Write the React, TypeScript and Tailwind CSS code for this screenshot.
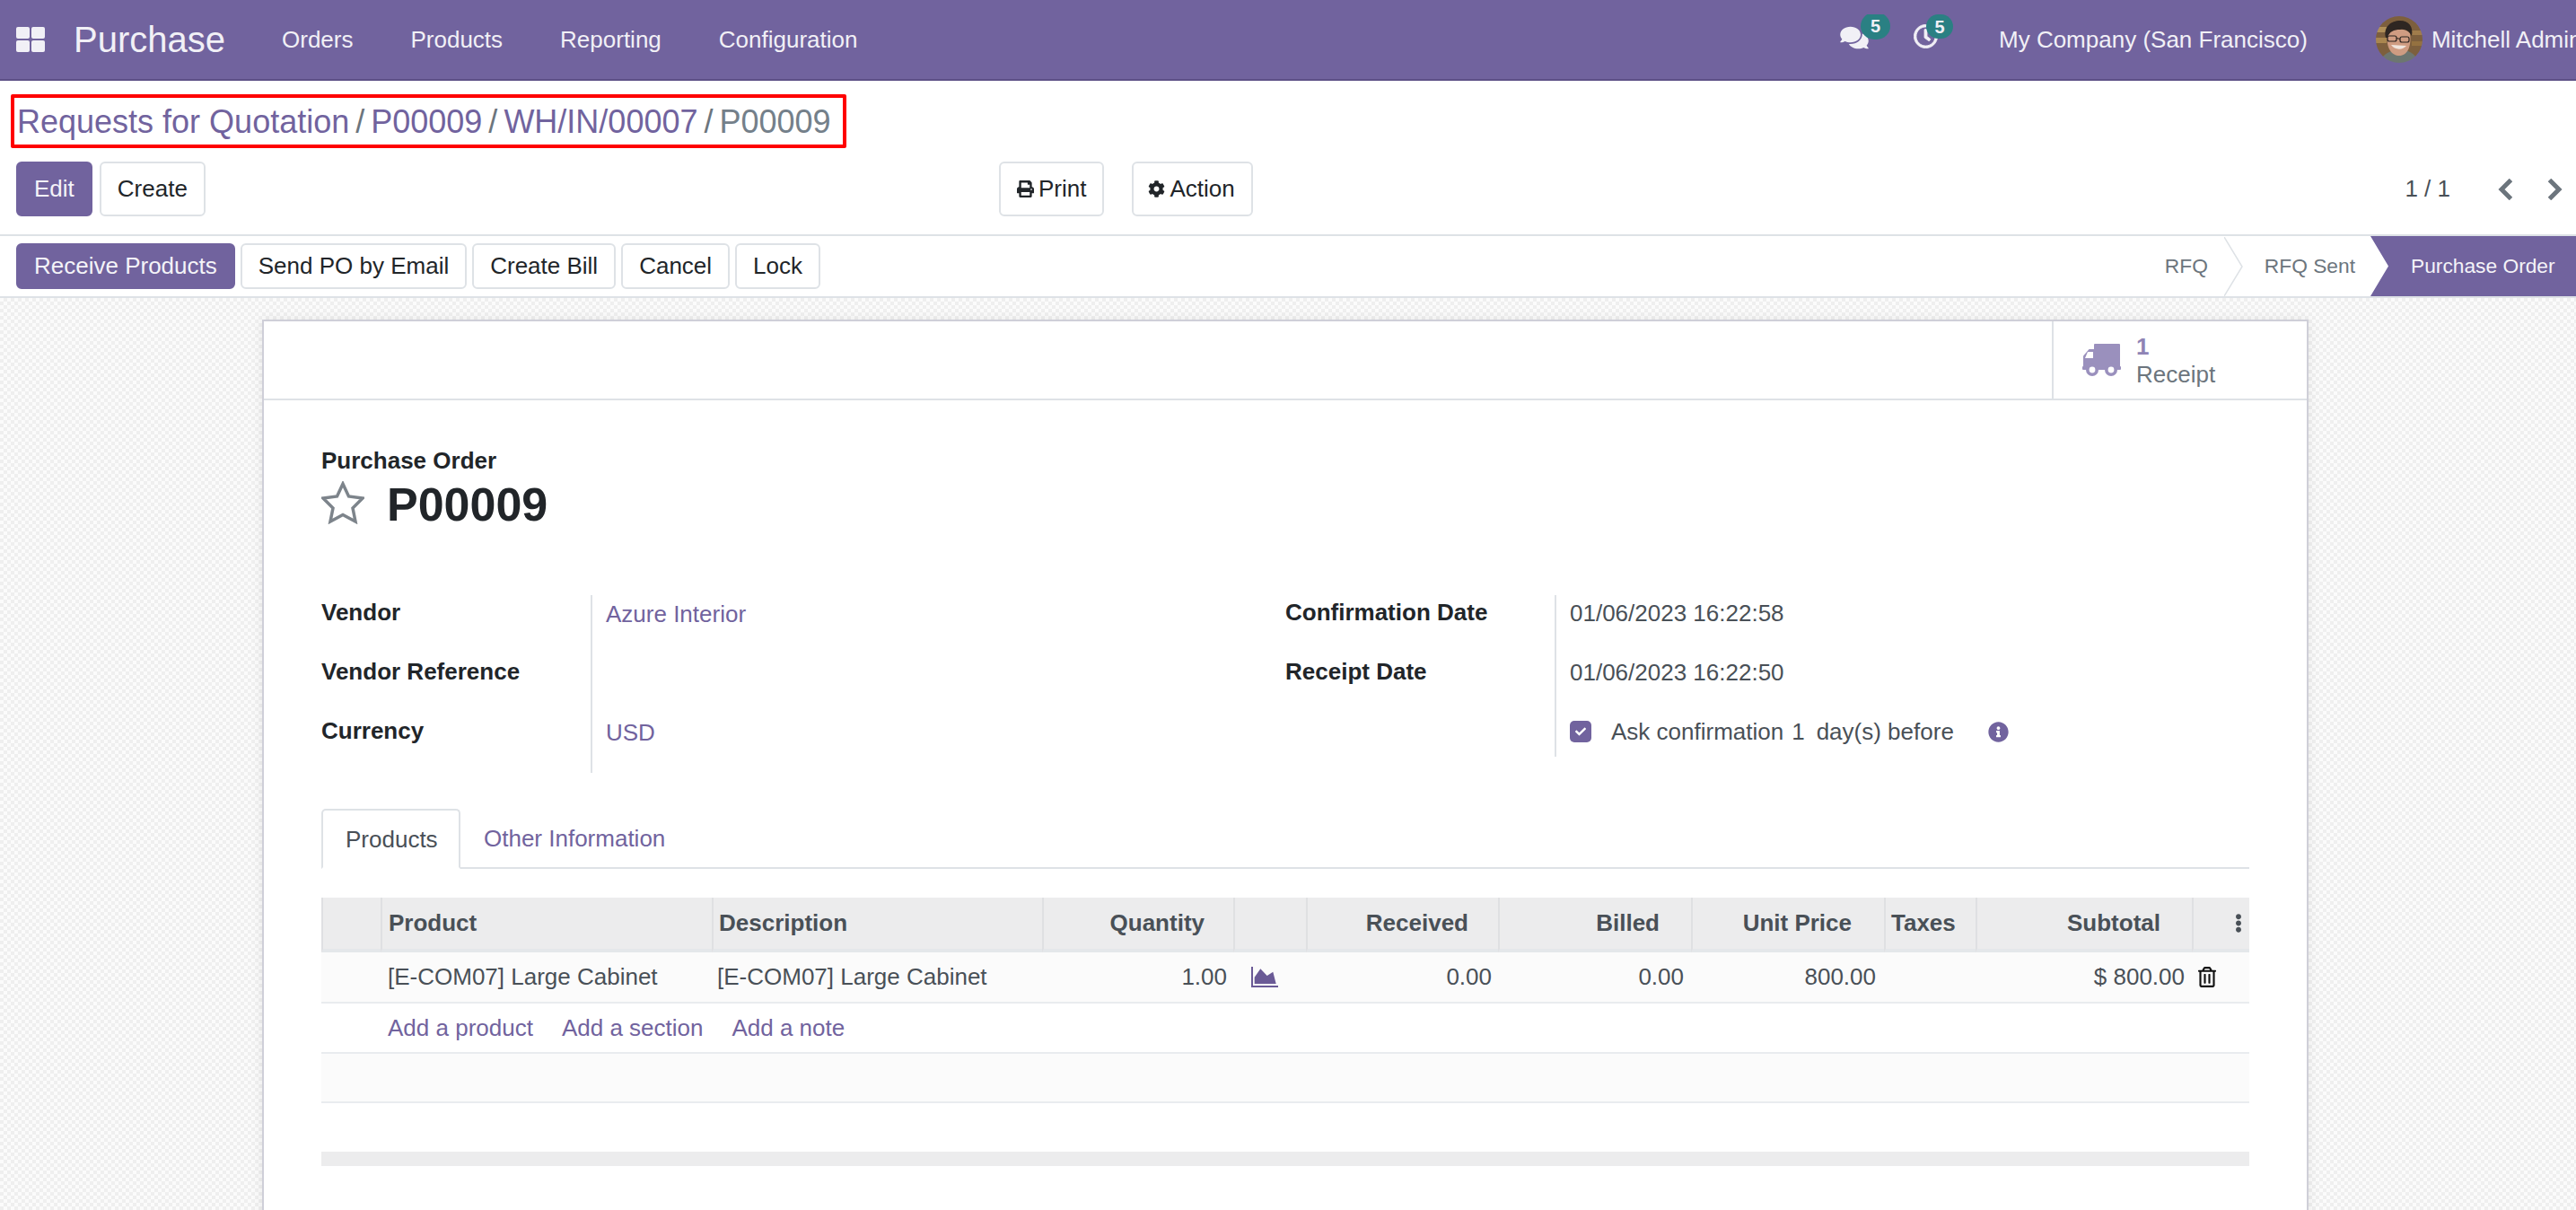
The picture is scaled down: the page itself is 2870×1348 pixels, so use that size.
import { FaCheck, FaCog, FaComments, FaEllipsisV, FaInfoCircle, FaPrint, FaRegClock, FaRegTrashAlt } from "react-icons/fa";

const menuItems = ["Orders", "Products", "Reporting", "Configuration"];

function AppsIcon() {
  return (
    <svg className="h-[28px] w-[32px] shrink-0" viewBox="0 0 32 28" fill="#f1f0f6">
      <rect x="0" y="0" width="15" height="13" rx="2" />
      <rect x="17" y="0" width="15" height="13" rx="2" />
      <rect x="0" y="15" width="15" height="13" rx="2" />
      <rect x="17" y="15" width="15" height="13" rx="2" />
    </svg>
  );
}

function Avatar() {
  return (
    <svg className="h-[52px] w-[52px] shrink-0 rounded-full" viewBox="0 0 52 52">
      <defs>
        <filter id="soft">
          <feGaussianBlur stdDeviation="0.7" />
        </filter>
      </defs>
      <g filter="url(#soft)">
        <rect width="52" height="52" fill="#7d5f3d" />
        <rect x="0" y="12" width="12" height="6" fill="#b08f58" />
        <rect x="0" y="24" width="12" height="6" fill="#a98650" />
        <rect x="40" y="16" width="12" height="5" fill="#a07c4c" />
        <rect x="40" y="28" width="12" height="5" fill="#94713f" />
        <path d="M5 52C6 43 14 40 20 38H33C39 40 46 43 47 52Z" fill="#6d766f" />
        <path d="M13 20C11 36 18 44 26 44C35 44 40 34 38 19C33 13 18 13 13 20Z" fill="#cf9c82" />
        <path d="M11 24C8 12 17 5 27 5C37 5 42 12 40 22C37 17 34 14 27 15C20 15 15 17 13 24Z" fill="#2f2620" />
        <rect x="13" y="22" width="10" height="6" rx="2" fill="none" stroke="#2b2420" strokeWidth="1.2" />
        <rect x="27" y="23" width="10" height="6" rx="2" fill="none" stroke="#2b2420" strokeWidth="1.2" />
        <path d="M23 24.5L27 25.5" stroke="#2b2420" strokeWidth="1.2" />
        <path d="M17 32C21 38 30 38 34 33Z" fill="#f1e6de" />
      </g>
    </svg>
  );
}

function Badge({ className }: { className: string }) {
  return (
    <span className={`absolute flex items-center justify-center rounded-full bg-[#2a8083] text-[20px] font-bold text-[#f1f0f6] ${className}`}>
      5
    </span>
  );
}

function Navbar() {
  return (
    <header className="flex h-[90px] shrink-0 items-center border-b-2 border-[#5d5086] bg-[#71639e] pl-[18px] text-[26px] text-[#f1f0f6]">
      <AppsIcon />
      <div className="ml-[32px] w-[232px] shrink-0 text-[40px]">Purchase</div>
      <nav className="flex gap-[64px]">
        {menuItems.map((item) => (
          <span key={item}>{item}</span>
        ))}
      </nav>
      <div className="ml-auto flex w-[820px] shrink-0 items-center overflow-hidden">
        <div className="relative h-[56px] w-[82px] shrink-0">
          <FaComments className="absolute left-0 top-[12px] h-[28px] w-[32px]" />
          <Badge className="left-[23px] top-[-2px] h-[30px] w-[33px]" />
        </div>
        <div className="relative h-[56px] w-[95px] shrink-0">
          <FaRegClock className="absolute left-0 top-[11px] h-[27px] w-[27px]" stroke="currentColor" strokeWidth={16} />
          <Badge className="left-[14px] top-0 h-[27px] w-[30px]" />
        </div>
        <span className="whitespace-nowrap">My Company (San Francisco)</span>
        <div className="ml-[76px] flex shrink-0 items-center gap-[10px]">
          <Avatar />
          <span className="whitespace-nowrap">Mitchell Admin</span>
        </div>
      </div>
    </header>
  );
}

function Button({ primary, children }: { primary?: boolean; children: React.ReactNode }) {
  return (
    <button
      className={
        primary
          ? "flex h-full items-center gap-[5px] rounded-[6px] border-2 border-[#71639e] bg-[#71639e] px-[18px] text-[#f4f3f8]"
          : "flex h-full items-center gap-[5px] rounded-[6px] border-2 border-[#dee2e6] bg-white px-[18px] text-[#212529]"
      }
      type="button"
    >
      {children}
    </button>
  );
}

function ControlPanel() {
  return (
    <section className="shrink-0 border-b-2 border-[#dee2e6] bg-white pb-[20px] pt-[15px]">
      <div className="ml-[12px] flex h-[60px] w-[931px] items-center rounded-[2px] border-4 border-[#ff0000] pl-[3px] pt-[2px] text-[36px] text-[#71639e]">
        <span>Requests for Quotation</span>
        <span className="mx-[7px] text-[#6c757d]">/</span>
        <span>P00009</span>
        <span className="mx-[7px] text-[#6c757d]">/</span>
        <span>WH/IN/00007</span>
        <span className="mx-[7px] text-[#6c757d]">/</span>
        <span className="text-[#74808a]">P00009</span>
      </div>
      <div className="mt-[15px] flex h-[61px] items-center pl-[18px]">
        <div className="flex h-full w-[1095px] shrink-0 gap-[8px]">
          <Button primary>Edit</Button>
          <Button>Create</Button>
        </div>
        <div className="flex h-full gap-[31px]">
          <Button>
            <FaPrint className="h-[19px] w-[19px]" />
            Print
          </Button>
          <Button>
            <FaCog className="-ml-[2px] h-[19px] w-[19px]" />
            Action
          </Button>
        </div>
        <div className="ml-auto flex items-center pr-[15px] text-[#495057]">
          <span>1 / 1</span>
          <svg className="ml-[53px] h-[24px] w-[16px]" viewBox="0 0 16 24" fill="none" stroke="#6c757d" strokeWidth="5">
            <polyline points="14.5,1.5 4,12 14.5,22.5" />
          </svg>
          <svg className="ml-[39px] h-[24px] w-[17px]" viewBox="0 0 17 24" fill="none" stroke="#6c757d" strokeWidth="5">
            <polyline points="2.5,1.5 13,12 2.5,22.5" />
          </svg>
        </div>
      </div>
    </section>
  );
}

function StatusBar() {
  return (
    <section className="flex h-[69px] shrink-0 items-center border-b-2 border-[#dee2e6] bg-white pl-[18px]">
      <div className="flex h-[51px] gap-[6px]">
        <Button primary>Receive Products</Button>
        <Button>Send PO by Email</Button>
        <Button>Create Bill</Button>
        <Button>Cancel</Button>
        <Button>Lock</Button>
      </div>
      <div className="ml-auto flex h-full items-center text-[22.75px] text-[#6c757d]">
        <span>RFQ</span>
        <svg className="ml-[18px] h-[66px] w-[21px]" viewBox="0 0 21 66" fill="none" stroke="#dee2e6" strokeWidth="1.5">
          <polyline points="0,0 20,33 0,66" />
        </svg>
        <span className="ml-[24px]">RFQ Sent</span>
        <div className="ml-[17px] flex h-full w-[229px] items-center bg-[#71639e] pl-[45px] text-[#f4f3f8] [clip-path:polygon(0_0,100%_0,100%_100%,0_100%,20px_50%)]">
          Purchase Order
        </div>
      </div>
    </section>
  );
}

function Field({ label, value, link }: { label: string; value?: string; link?: boolean }) {
  return (
    <div className="flex h-[66px] leading-[40px]">
      <div className="-mt-px w-[300px] shrink-0 font-bold text-[#212529]">{label}</div>
      <div className={link ? "border-l-2 border-[#dee2e6] pl-[15px] pt-px text-[#71639e]" : "border-l-2 border-[#dee2e6] pl-[15px] text-[#495057]"}>
        {value}
      </div>
    </div>
  );
}

function OrderHeader() {
  return (
    <>
      <div className="text-[26px] font-bold leading-[36px] text-[#212529]">Purchase Order</div>
      <div className="flex h-[62px] items-center">
        <svg className="-mt-[4px] h-[48px] w-[48px]" viewBox="0 0 48 48" fill="none" stroke="#7d848b" strokeWidth="3.5">
          <polygon points="24,3 30.5,17 46,19 35,30 38,45 24,37.5 10,45 13,30 2,19 17.5,17" />
        </svg>
        <h1 className="ml-[25px] text-[52px] font-bold text-[#212529]">P00009</h1>
      </div>
      <div className="mt-[70px] flex">
        <div className="w-[1074px] shrink-0">
          <Field label="Vendor" value="Azure Interior" link />
          <Field label="Vendor Reference" />
          <Field label="Currency" value="USD" link />
        </div>
        <div>
          <Field label="Confirmation Date" value="01/06/2023 16:22:58" />
          <Field label="Receipt Date" value="01/06/2023 16:22:50" />
          <div className="flex h-[48px] leading-[40px]">
            <div className="w-[300px] shrink-0" />
            <div className="flex items-start border-l-2 border-[#dee2e6] pl-[15px] text-[#495057]">
              <span className="mt-[8px] flex h-[24px] w-[24px] items-center justify-center rounded-[5px] bg-[#71639e]">
                <FaCheck className="h-[12px] w-[12px] text-white" />
              </span>
              <span className="ml-[22px]">Ask confirmation</span>
              <span className="ml-[9px]">1</span>
              <span className="ml-[13px]">day(s) before</span>
              <FaInfoCircle className="ml-[38px] mt-[9px] h-[23px] w-[23px] text-[#71639e]" />
            </div>
          </div>
        </div>
      </div>
    </>
  );
}

function ChartIcon() {
  return (
    <svg className="ml-[20px] h-[23px] w-[30px]" viewBox="0 0 30 23" fill="#6a5a96">
      <rect x="0" y="0" width="2" height="23" />
      <rect x="0" y="21" width="30" height="2" />
      <polygon points="3.7,19 3.7,11.7 10.3,2.3 17.7,10 24.3,5.7 27.7,19" />
    </svg>
  );
}

function OrderLines() {
  return (
    <table className="mt-[32px] w-full table-fixed border-separate border-spacing-0 text-[26px] text-[#495057]">
      <thead>
        <tr className="h-[61px] bg-[#ececed] font-bold">
          <th className="w-[66px] border-b-4 border-b-[#e4e7ea] border-l-2 border-l-[#dfe0e2]" />
          <th className="w-[369px] border-b-4 border-b-[#e4e7ea] border-l-2 border-l-[#dfe0e2] pl-[7px] text-left">Product</th>
          <th className="w-[368px] border-b-4 border-b-[#e4e7ea] border-l-2 border-l-[#dfe0e2] pl-[6px] text-left">Description</th>
          <th className="w-[213px] border-b-4 border-b-[#e4e7ea] border-l-2 border-l-[#dfe0e2] pr-[32px] text-right">Quantity</th>
          <th className="w-[81px] border-b-4 border-b-[#e4e7ea] border-l-2 border-l-[#dfe0e2]" />
          <th className="w-[214px] border-b-4 border-b-[#e4e7ea] border-l-2 border-l-[#dfe0e2] pr-[33px] text-right">Received</th>
          <th className="w-[215px] border-b-4 border-b-[#e4e7ea] border-l-2 border-l-[#dfe0e2] pr-[35px] text-right">Billed</th>
          <th className="w-[215px] border-b-4 border-b-[#e4e7ea] border-l-2 border-l-[#dfe0e2] pr-[36px] text-right">Unit Price</th>
          <th className="w-[102px] border-b-4 border-b-[#e4e7ea] border-l-2 border-l-[#dfe0e2] pl-[6px] text-left">Taxes</th>
          <th className="w-[241px] border-b-4 border-b-[#e4e7ea] border-l-2 border-l-[#dfe0e2] pr-[35px] text-right">Subtotal</th>
          <th className="w-[64px] border-b-4 border-b-[#e4e7ea] border-l-2 border-l-[#dfe0e2]">
            <FaEllipsisV className="ml-[46px] h-[21px] w-[8px]" />
          </th>
        </tr>
      </thead>
      <tbody>
        <tr className="h-[57px] bg-[#fbfbfb]">
          <td className="border-b-2 border-[#e9ecef]" />
          <td className="border-b-2 border-[#e9ecef] pl-[8px]">[E-COM07] Large Cabinet</td>
          <td className="border-b-2 border-[#e9ecef] pl-[6px]">[E-COM07] Large Cabinet</td>
          <td className="border-b-2 border-[#e9ecef] pr-[7px] text-right">1.00</td>
          <td className="border-b-2 border-[#e9ecef]">
            <ChartIcon />
          </td>
          <td className="border-b-2 border-[#e9ecef] pr-[7px] text-right">0.00</td>
          <td className="border-b-2 border-[#e9ecef] pr-[8px] text-right">0.00</td>
          <td className="border-b-2 border-[#e9ecef] pr-[9px] text-right">800.00</td>
          <td className="border-b-2 border-[#e9ecef]" />
          <td className="border-b-2 border-[#e9ecef] pr-[8px] text-right">$ 800.00</td>
          <td className="border-b-2 border-[#e9ecef]">
            <FaRegTrashAlt className="ml-[7px] h-[23px] w-[20px] text-[#111111]" />
          </td>
        </tr>
        <tr className="h-[56px]">
          <td className="border-b-2 border-[#e9ecef]" />
          <td colSpan={10} className="border-b-2 border-[#e9ecef] pl-[8px] text-[#71639e]">
            <div className="flex gap-[32px]">
              <span>Add a product</span>
              <span>Add a section</span>
              <span>Add a note</span>
            </div>
          </td>
        </tr>
        <tr className="h-[55px] bg-[#fbfbfb]">
          <td colSpan={11} className="border-b-2 border-[#e9ecef]" />
        </tr>
        <tr className="h-[54px]">
          <td colSpan={11} />
        </tr>
      </tbody>
      <tfoot>
        <tr className="h-[16px] bg-[#ececed]">
          <td colSpan={11} />
        </tr>
      </tfoot>
    </table>
  );
}

function Sheet() {
  return (
    <div className="ml-[292px] mt-[24px] min-h-[1100px] w-[2280px] border-2 border-[#cfcfd8] bg-white shadow-[0_0_12px_rgba(0,0,0,0.08)]">
      <div className="flex h-[88px] justify-end border-b-2 border-[#dee2e6]">
        <div className="flex w-[284px] items-center border-l-2 border-[#dee2e6] pl-[32px]">
          <svg className="h-[36px] w-[43px] shrink-0" viewBox="0 0 43 36" fill="#9a90bd">
            <rect x="13" y="0" width="29" height="28" rx="1" />
            <path d="M14 6H7.5L1 13.5V28H14Z" />
            <rect x="0" y="25" width="43" height="4" rx="1" />
            <path d="M6 9H12V16H3Z" fill="#ffffff" />
            <circle cx="11" cy="29" r="7" />
            <circle cx="32" cy="29" r="7" />
            <circle cx="11" cy="29" r="3.4" fill="#ffffff" />
            <circle cx="32" cy="29" r="3.4" fill="#ffffff" />
          </svg>
          <div className="ml-[17px] pt-[2px] leading-[31px]">
            <div className="font-bold text-[#8f84b5]">1</div>
            <div className="text-[#6c757d]">Receipt</div>
          </div>
        </div>
      </div>
      <div className="px-[64px] pt-[49px]">
        <OrderHeader />
        <div className="mt-[40px] flex h-[67px] border-b-2 border-[#dee2e6]">
          <div className="-mb-[2px] flex h-[67px] w-[155px] items-center rounded-t-[5px] border-2 border-[#dee2e6] border-b-white bg-white pl-[25px] pt-px text-[#495057]">
            Products
          </div>
          <div className="flex h-[65px] items-center pl-[26px] pt-px text-[#71639e]">Other Information</div>
        </div>
        <OrderLines />
      </div>
    </div>
  );
}

export default function App() {
  return (
    <div className="flex h-[1348px] w-[2870px] flex-col overflow-hidden bg-white font-[family-name:'Liberation_Sans',Arial,sans-serif] text-[26px]">
      <Navbar />
      <ControlPanel />
      <StatusBar />
      <main className="min-h-0 flex-1 overflow-hidden bg-[repeating-conic-gradient(#efefef_0_25%,#fbfbfb_0_50%)] bg-[length:8px_8px]">
        <Sheet />
      </main>
    </div>
  );
}
